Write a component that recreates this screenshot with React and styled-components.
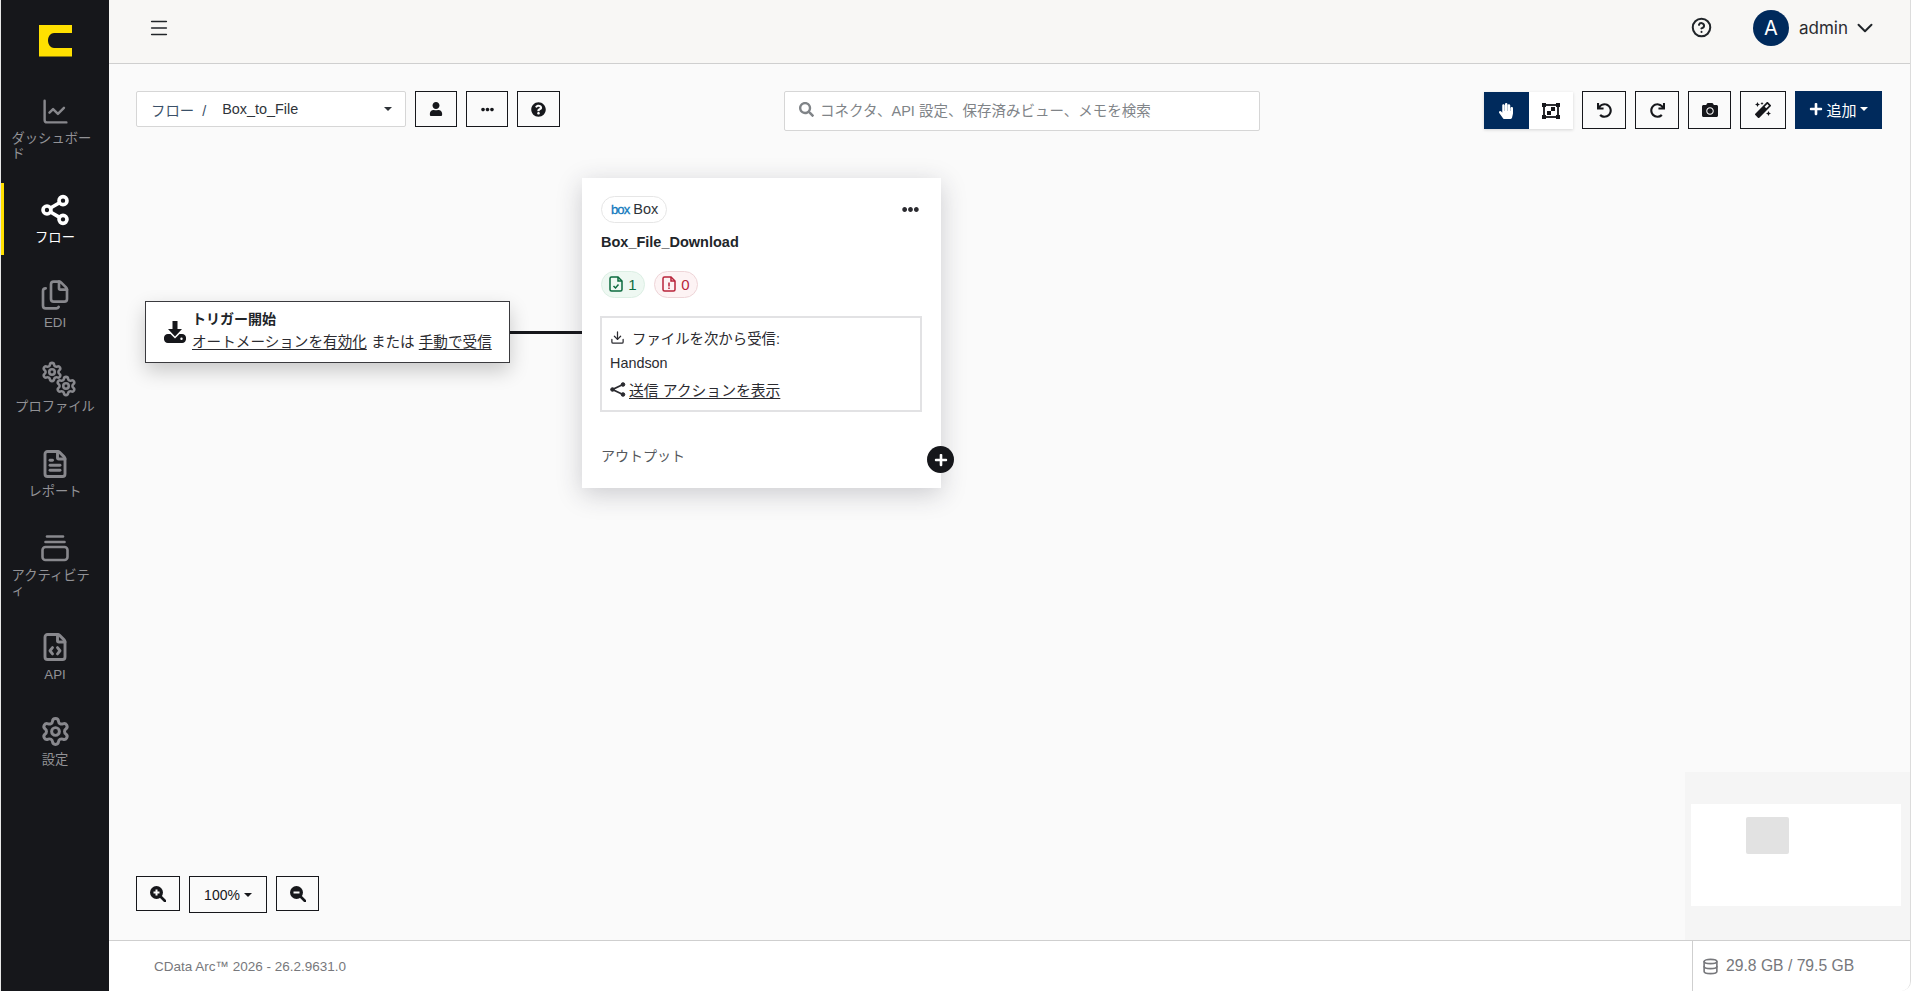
import React from 'react';
import styled, { createGlobalStyle } from 'styled-components';
import {
  ChartLine, Share2, Files, Settings, FileText, FileCode, Menu, ChevronDown,
  CircleHelp, Database, Download,
} from 'lucide-react';
import {
  FaHandPaper, FaCamera, FaMagic, FaSearch, FaUser, FaEllipsisH,
  FaQuestionCircle, FaPlus, FaUndo, FaRedo,
} from 'react-icons/fa';

const GlobalStyle = createGlobalStyle`
  html, body { margin: 0; padding: 0; height: 100%; background: #fff; }
  * { box-sizing: border-box; }
  body { font-family: "Liberation Sans", "Noto Sans CJK JP", sans-serif; color: #212529; }
  #root { height: 100%; }
`;

const AppShell = styled.div`
  display: grid;
  grid-template-columns: 109px 1fr;
  height: 991px;
  overflow: hidden;
  border-right: 1px solid #dcdcdc;
  border-bottom-right-radius: 10px;
`;

const Sidebar = styled.nav`
  background: #16171b;
  border-left: 1px solid #e8e8e8;
  display: flex;
  flex-direction: column;
  gap: 13px;
`;

const LogoWrap = styled.div`
  height: 71px;
  padding-top: 25px;
  padding-left: 38px;
`;

const NavItem = styled.a`
  position: relative;
  display: flex;
  flex-direction: column;
  align-items: center;
  padding: 12px 0 9px;
  gap: 6px;
  color: ${p => (p.$active ? '#ffffff' : '#88888d')};
  &::before {
    content: '';
    display: ${p => (p.$active ? 'block' : 'none')};
    position: absolute;
    left: 0;
    top: 0;
    bottom: 0;
    width: 3px;
    background: #ffe000;
  }
`;

const NavIcon = styled.div`
  height: 30px;
  display: flex;
  align-items: center;
  justify-content: center;
`;

const NavLabel = styled.span`
  width: 87px;
  font-size: 13.300px;
  line-height: 14.500px;
  text-align: ${p => (p.$wrap ? 'left' : 'center')};
  color: ${p => (p.$active ? '#ffffff' : '#929296')};
`;

const Main = styled.div`
  display: flex;
  flex-direction: column;
  min-width: 0;
`;

const Header = styled.header`
  height: 64px;
  flex: none;
  background: #f8f7f5;
  border-bottom: 1px solid #cfcfcf;
  display: flex;
  align-items: center;
  justify-content: space-between;
  padding: 0 32px 8px 39px;
  color: #212529;
`;

const HeaderRight = styled.div`
  display: flex;
  align-items: center;
`;

const Avatar = styled.div`
  width: 36px;
  height: 36px;
  border-radius: 50%;
  background: #002a5c;
  color: #fff;
  display: flex;
  align-items: center;
  justify-content: center;
  font: 400 20px Inter, sans-serif;
  margin-left: 41px;
`;

const UserName = styled.span`
  font: 400 17px Inter, sans-serif;
  color: #2b2b30;
  margin: 0 4px 0 10px;
`;

const Canvas = styled.div`
  position: relative;
  flex: 1;
  background: #fafafa;
  min-height: 0;
`;

const Toolbar = styled.div`
  display: flex;
  align-items: flex-start;
  justify-content: space-between;
  padding: 27px 28px 0 27px;
`;

const ToolGroup = styled.div`
  display: flex;
  align-items: flex-start;
  gap: 9px;
`;

const FlowSelect = styled.div`
  width: 270px;
  height: 36px;
  background: #fff;
  border: 1px solid #d6d6d6;
  border-radius: 2px;
  display: flex;
  align-items: center;
  padding: 0 13px 0 14px;
  font-size: 14.400px;
  color: #2e3338;
`;

const Crumb = styled.span`
  margin-right: 16px;
  color: ${p => (p.$muted ? '#3a5068' : '#2e3338')};
`;

const Caret = styled.span`
  display: inline-block;
  margin-left: ${p => p.$gap ?? 0}px;
  border-left: 4px solid transparent;
  border-right: 4px solid transparent;
  border-top: 4px solid currentColor;
`;

const Spacer = styled.div`
  flex: 1;
`;

const IconButton = styled.button`
  width: ${p => p.$w || 43}px;
  height: ${p => p.$h || 36}px;
  padding: 0;
  background: transparent;
  border: 1px solid #16171b;
  color: #16171b;
  display: flex;
  align-items: center;
  justify-content: center;
  font: 400 14px "Liberation Sans", sans-serif;
`;

const Toggle = styled.div`
  display: flex;
  height: 37px;
  margin-top: 1px;
  box-shadow: 0 1px 3px rgba(0, 0, 0, 0.15);
`;

const ToggleItem = styled.div`
  width: 44.500px;
  display: flex;
  align-items: center;
  justify-content: center;
  background: ${p => (p.$on ? '#002a5c' : '#fff')};
  color: ${p => (p.$on ? '#fff' : '#16171b')};
`;

const AddButton = styled.button`
  width: 87px;
  height: 38px;
  border: 0;
  padding: 0 0 2px;
  background: #002a5c;
  color: #fff;
  display: flex;
  align-items: center;
  justify-content: center;
  gap: 3px;
  font: 400 15px "Liberation Sans", "Noto Sans CJK JP", sans-serif;
`;

const SearchBox = styled.div`
  width: 476px;
  height: 40px;
  background: #fff;
  border: 1px solid #d6d6d6;
  border-radius: 2px;
  display: flex;
  align-items: center;
  gap: 6px;
  padding: 0 14px 4px;
  color: #808488;
  font-size: 14.500px;
`;

const TriggerNode = styled.div`
  position: absolute;
  left: 36px;
  top: 237px;
  width: 365px;
  height: 62px;
  background: #fff;
  border: 1px solid #3a3a3e;
  box-shadow: 0 8px 20px rgba(0, 0, 0, 0.2);
  display: flex;
  align-items: center;
  gap: 6px;
  padding: 0 0 0 18px;
  z-index: 2;
`;

const TriggerText = styled.div`
  display: flex;
  flex-direction: column;
  gap: 4px;
  font-size: 14.600px;
  line-height: 20px;
  color: #2b2b30;
  white-space: nowrap;
  margin-top: -2px;
`;

const TriggerTitle = styled.strong`
  font-weight: 700;
  font-size: 14px;
  line-height: 18px;
  color: #212529;
`;

const Link = styled.a`
  color: #2b2b30;
  text-decoration: underline;
  text-underline-offset: 2px;
`;

const Connector = styled.div`
  position: absolute;
  left: 401px;
  top: 267px;
  width: 73px;
  height: 3px;
  background: #16171b;
`;

const FlowCard = styled.div`
  position: absolute;
  left: 473px;
  top: 114px;
  width: 359px;
  height: 310px;
  background: #fff;
  padding: 18px 19px;
  box-shadow: 0 6px 24px rgba(40, 40, 60, 0.22);
  display: flex;
  flex-direction: column;
  z-index: 2;
`;

const CardTop = styled.div`
  display: flex;
  align-items: center;
  justify-content: space-between;
  padding-right: 3px;
  color: #2b2b30;
`;

const ConnectorChip = styled.div`
  display: inline-flex;
  align-items: center;
  gap: 4px;
  height: 27px;
  padding: 0 8px 1px 9px;
  border: 1px solid #e6e6e6;
  border-radius: 14px;
  font-size: 14.500px;
  color: #2e3338;
`;

const BoxMark = styled.span`
  font: 400 13px "Liberation Sans", sans-serif;
  letter-spacing: -0.900px;
  -webkit-text-stroke: 0.300px #0f78bd;
  color: #0f78bd;
`;

const CardTitle = styled.div`
  font-weight: 700;
  font-size: 14.500px;
  line-height: 18px;
  margin-top: 10px;
  color: #212529;
`;

const Badges = styled.div`
  display: flex;
  gap: 9px;
  margin-top: 20px;
`;

const CountBadge = styled.div`
  width: 44px;
  height: 27px;
  border-radius: 14px;
  display: flex;
  align-items: center;
  justify-content: center;
  gap: 5px;
  padding-bottom: 1px;
  font-size: 15px;
  color: ${p => (p.$error ? '#b8233a' : '#0d6b3f')};
  background: ${p => (p.$error ? '#fdf3f4' : '#eef8f2')};
  border: 1px solid ${p => (p.$error ? '#eed5d8' : '#dcefe4')};
`;

const InfoBox = styled.div`
  margin-top: 18px;
  margin-left: -1px;
  height: 96px;
  border: 2px solid #e2e2e4;
  padding: 6px 8px;
  display: flex;
  flex-direction: column;
  font-size: 14.400px;
  color: #2b2b30;
`;

const InfoRow = styled.div`
  display: flex;
  align-items: center;
  gap: ${p => p.$gap ?? 7}px;
  height: 26px;
  font-size: ${p => p.$size || 14.4}px;
`;

const OutputRow = styled.div`
  margin-top: auto;
  padding-bottom: 5px;
  font-size: 14px;
  color: #55585c;
`;

const AddOutput = styled.button`
  position: absolute;
  right: -13px;
  bottom: 15px;
  width: 27px;
  height: 27px;
  padding: 0;
  border: 0;
  border-radius: 50%;
  background: #16171b;
  color: #fff;
  display: flex;
  align-items: center;
  justify-content: center;
`;

const ZoomControls = styled.div`
  position: absolute;
  left: 27px;
  bottom: 27px;
  display: flex;
  gap: 9px;
`;

const MiniMap = styled.div`
  position: absolute;
  right: -1px;
  bottom: 0;
  width: 226px;
  height: 168px;
  background: #f5f5f5;
  padding: 32px 10px 34px 6px;
`;

const MiniViewport = styled.div`
  height: 102px;
  background: #fff;
  padding: 13px 0 0 55px;
`;

const MiniNode = styled.div`
  width: 43px;
  height: 37px;
  border-radius: 2px;
  background: #e2e2e2;
`;

const Footer = styled.footer`
  height: 51px;
  flex: none;
  background: #fff;
  border-top: 1px solid #cfcfcf;
  display: flex;
  align-items: stretch;
  justify-content: space-between;
  color: #77787c;
`;

const Version = styled.div`
  display: flex;
  align-items: center;
  padding-left: 45px;
  font-size: 13.500px;
`;

const Storage = styled.div`
  width: 218px;
  border-left: 1px solid #cfcfcf;
  display: flex;
  align-items: center;
  gap: 7px;
  padding-left: 9px;
  font-size: 15.700px;
`;

const ActivityIcon = () => (
  <svg width="28" height="28" viewBox="0 0 28 28" fill="none" stroke="currentColor" strokeWidth="2.600" strokeLinecap="round" strokeLinejoin="round">
    <path d="M6 2.500h16" />
    <path d="M4.500 8h19" />
    <rect x="1.500" y="13" width="25" height="13" rx="3" />
  </svg>
);

const ProfileSvg = styled.svg`
  margin-left: 8px;
`;

const ProfileIcon = () => (
  <ProfileSvg width="36" height="36" viewBox="0 0 36 36">
    <Settings x="0" y="0" width="22" height="22" strokeWidth="2.800" />
    <Settings x="14" y="14" width="22" height="22" strokeWidth="2.800" />
  </ProfileSvg>
);

const Logo = () => (
  <svg width="33" height="32" viewBox="0 0 33 32">
    <path fillRule="evenodd" fill="#ffe000" d="M0 0h33v8H15c-3 0-6 3-6 7.500S12 23 15 23h18v8.500H0z" />
  </svg>
);

const TriggerIcon = () => (
  <svg width="22" height="23" viewBox="0 0 22 23" fill="#16171b">
    <path d="M8.500 0h5v8h4.500L11 15.500 4 8h4.500z" />
    <path fillRule="evenodd" d="M4 13h2.500l4.500 4.500 4.500-4.500H18a4 4 0 0 1 4 4.500 4 4 0 0 1-4 4.500H4a4 4 0 0 1-4-4.500A4 4 0 0 1 4 13zm13.500 3.500a1.200 1.200 0 1 0 0 2.400 1.200 1.200 0 0 0 0-2.400z" />
  </svg>
);

const ZoomIcon = ({ plus }) => (
  <svg width="16" height="16" viewBox="0 0 16 16">
    <circle cx="6.500" cy="6.500" r="6.500" fill="#16171b" />
    <path d="M10.500 10.500 15 15" stroke="#16171b" strokeWidth="2.600" strokeLinecap="round" />
    <path d={plus ? 'M3.500 6.500h6M6.500 3.500v6' : 'M3.500 6.500h6'} stroke="#fafafa" strokeWidth="2" />
  </svg>
);

const FitIcon = () => (
  <svg width="18" height="16" viewBox="0 0 18 16">
    <rect x="2" y="2" width="14" height="12" fill="none" stroke="currentColor" strokeWidth="1.800" />
    <path fill="currentColor" d="M0 0h4v4H0zM14 0h4v4h-4zM0 12h4v4H0zM14 12h4v4h-4zM5 8h4v4H5zM9 4h4v4H9z" />
  </svg>
);

const SendIcon = () => (
  <svg width="16" height="15" viewBox="0 0 16 15" fill="currentColor" stroke="currentColor">
    <path d="M14 2 2.500 7.500 14 13" fill="none" strokeWidth="1.800" />
    <circle cx="2.500" cy="7.500" r="1.800" />
    <circle cx="13" cy="2.500" r="1.800" />
    <circle cx="13" cy="12.500" r="1.800" />
  </svg>
);

const fileOutline = 'M1 2.500A1.500 1.500 0 0 1 2.500 1H9l4 4v8.500A1.500 1.500 0 0 1 11.500 15h-9A1.500 1.500 0 0 1 1 13.500z';

const StatusIcon = ({ mark }) => (
  <svg width="14" height="16" viewBox="0 0 14 16" fill="none" stroke="currentColor" strokeWidth="1.500">
    <path d={fileOutline} />
    <path d={`M9 1v4h4${mark}`} />
  </svg>
);

const navItems = [
  { label: 'ダッシュボード', icon: <ChartLine size={29} strokeWidth={2} />, wrap: true },
  { label: 'フロー', icon: <Share2 size={32} strokeWidth={2.700} />, active: true },
  { label: 'EDI', icon: <Files size={32} strokeWidth={2} /> },
  { label: 'プロファイル', icon: <ProfileIcon /> },
  { label: 'レポート', icon: <FileText size={30} strokeWidth={2.300} /> },
  { label: 'アクティビティ', icon: <ActivityIcon />, wrap: true },
  { label: 'API', icon: <FileCode size={30} strokeWidth={2.300} /> },
  { label: '設定', icon: <Settings size={31} strokeWidth={2.300} /> },
];

const App = () => (
  <AppShell>
    <GlobalStyle />
    <Sidebar>
      <LogoWrap><Logo /></LogoWrap>
      {navItems.map(item => (
        <NavItem key={item.label} $active={item.active}>
          <NavIcon>{item.icon}</NavIcon>
          <NavLabel $active={item.active} $wrap={item.wrap}>{item.label}</NavLabel>
        </NavItem>
      ))}
    </Sidebar>
    <Main>
      <Header>
        <Menu size={22} strokeWidth={1.700} />
        <HeaderRight>
          <CircleHelp size={21} strokeWidth={2.300} />
          <Avatar>A</Avatar>
          <UserName>admin</UserName>
          <ChevronDown size={26} strokeWidth={1.800} />
        </HeaderRight>
      </Header>
      <Canvas>
        <Toolbar>
          <ToolGroup>
            <FlowSelect>
              <Crumb $muted>フロー&nbsp; /</Crumb>
              <Crumb>Box_to_File</Crumb>
              <Spacer />
              <Caret />
            </FlowSelect>
            <IconButton $w={42}><FaUser size={14} /></IconButton>
            <IconButton $w={42}><FaEllipsisH size={13} /></IconButton>
            <IconButton><FaQuestionCircle size={15} /></IconButton>
          </ToolGroup>
          <SearchBox>
            <FaSearch size={15} />
            コネクタ、API 設定、保存済みビュー、メモを検索
          </SearchBox>
          <ToolGroup>
            <Toggle>
              <ToggleItem $on><FaHandPaper size={16} /></ToggleItem>
              <ToggleItem><FitIcon /></ToggleItem>
            </Toggle>
            <IconButton $w={44} $h={38}><FaUndo size={15} /></IconButton>
            <IconButton $w={44} $h={38}><FaRedo size={15} /></IconButton>
            <IconButton $w={43} $h={38}><FaCamera size={16} /></IconButton>
            <IconButton $w={46} $h={38}><FaMagic size={16} /></IconButton>
            <AddButton><FaPlus size={14} />追加<Caret /></AddButton>
          </ToolGroup>
        </Toolbar>

        <TriggerNode>
          <TriggerIcon />
          <TriggerText>
            <TriggerTitle>トリガー開始</TriggerTitle>
            <span><Link>オートメーションを有効化</Link> または <Link>手動で受信</Link></span>
          </TriggerText>
        </TriggerNode>
        <Connector />
        <FlowCard>
          <CardTop>
            <ConnectorChip><BoxMark>box</BoxMark>Box</ConnectorChip>
            <FaEllipsisH size={17} color="#2b2b30" />
          </CardTop>
          <CardTitle>Box_File_Download</CardTitle>
          <Badges>
            <CountBadge><StatusIcon mark="M4.500 10l2 2 3-3.500" />1</CountBadge>
            <CountBadge $error><StatusIcon mark="M7 6.500v4M7 11.500v1.500" />0</CountBadge>
          </Badges>
          <InfoBox>
            <InfoRow><Download size={15} strokeWidth={2} />ファイルを次から受信:</InfoRow>
            <InfoRow>Handson</InfoRow>
            <InfoRow $gap={3} $size={14.8}>
              <SendIcon />
              <Link>送信 アクションを表示</Link>
            </InfoRow>
          </InfoBox>
          <OutputRow>アウトプット</OutputRow>
          <AddOutput><FaPlus size={14} /></AddOutput>
        </FlowCard>

        <ZoomControls>
          <IconButton $w={44} $h={35}><ZoomIcon plus /></IconButton>
          <IconButton $w={78} $h={37}>100%<Caret $gap={4} /></IconButton>
          <IconButton $w={43} $h={35}><ZoomIcon /></IconButton>
        </ZoomControls>
        <MiniMap>
          <MiniViewport><MiniNode /></MiniViewport>
        </MiniMap>
      </Canvas>
      <Footer>
        <Version>CData Arc™ 2026 - 26.2.9631.0</Version>
        <Storage><Database size={17} strokeWidth={2.300} />29.8 GB / 79.5 GB</Storage>
      </Footer>
    </Main>
  </AppShell>
);

export default App;
